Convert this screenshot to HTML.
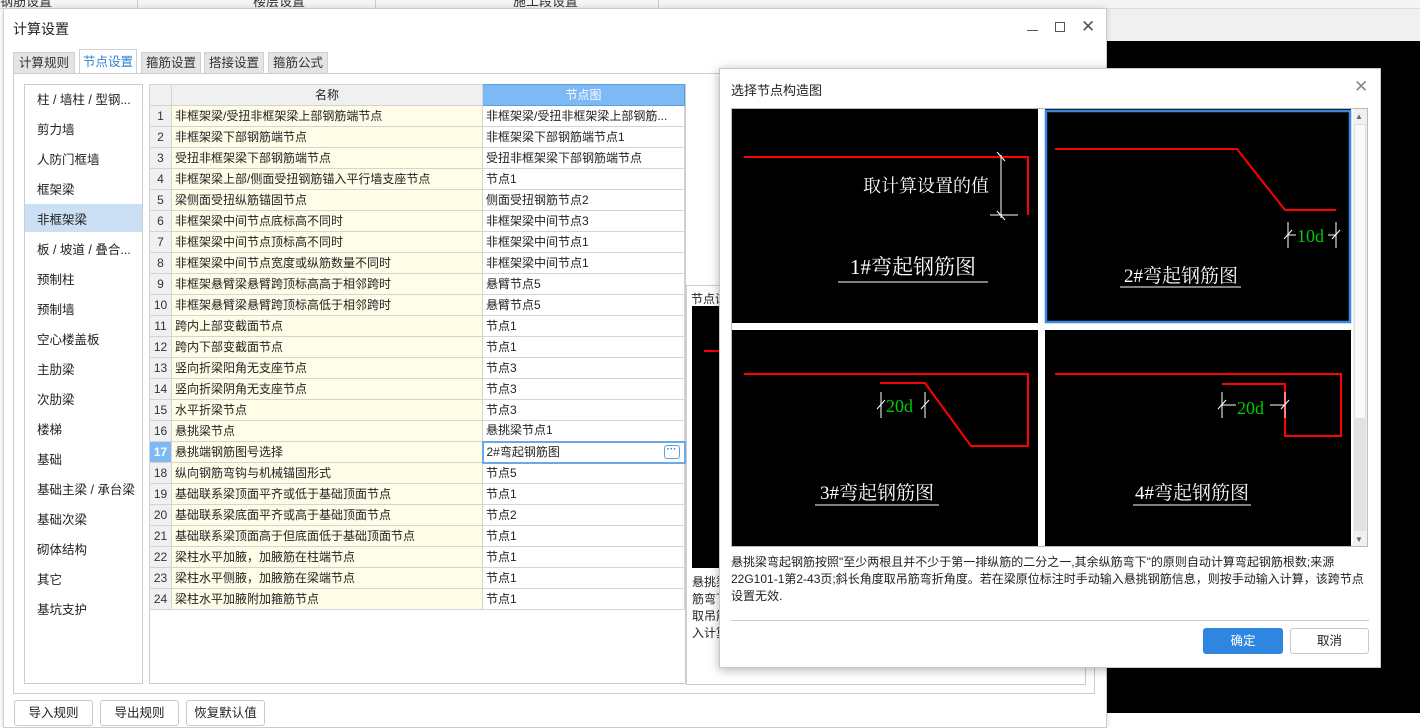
<!DOCTYPE html>
<html><head><meta charset="utf-8"><style>
*{box-sizing:border-box;margin:0;padding:0}
body{width:1420px;height:713px;overflow:hidden;background:#fff;position:relative;font-family:"Liberation Sans","Noto Sans CJK SC",sans-serif;font-size:12px;color:#222}
.a{position:absolute}
.tab{position:absolute;top:52px;height:21px;border:1px solid #d0d0d0;border-bottom:none;background:#e4e4e4;font-size:12.5px;color:#333;text-align:center;line-height:20px}
.li{position:absolute;left:37px;font-size:12.5px;color:#222}
table{border-collapse:collapse;position:absolute;left:149px;top:84px;table-layout:fixed}
td{border:1px solid #d4d4d4;height:21px;padding:0 3px;white-space:nowrap;overflow:hidden;font-size:12px;line-height:19px}
tr{height:21px}
td.n{background:#f0f0f0;text-align:center;color:#333;padding:0}
td.m{background:#fffde8}
.btn{position:absolute;border:1px solid #c8c8c8;border-radius:3px;background:#fff;text-align:center;font-size:12.5px}
</style></head><body>
<div class="a" style="left:0;top:0;width:1420px;height:9px;background:#f5f5f5;border-bottom:1px solid #ddd"></div>
<div class="a" style="left:0;top:-9px;font-size:13px;color:#333">钢筋设置</div>
<div class="a" style="left:253px;top:-9px;font-size:13px;color:#333">楼层设置</div>
<div class="a" style="left:513px;top:-9px;font-size:13px;color:#333">施工段设置</div>
<div class="a" style="left:137px;top:0;width:1px;height:8px;background:#ccc"></div>
<div class="a" style="left:375px;top:0;width:1px;height:8px;background:#ccc"></div>
<div class="a" style="left:658px;top:0;width:1px;height:8px;background:#ccc"></div>
<div class="a" style="left:1106px;top:9px;width:314px;height:32px;background:#f0f0f0"></div>
<div class="a" style="left:1106px;top:41px;width:314px;height:672px;background:#000"></div>

<div class="a" style="left:3px;top:8px;width:1104px;height:720px;background:#fff;border:1px solid #ccc;box-shadow:0 0 6px rgba(0,0,0,.15)"></div>
<div class="a" style="left:13px;top:19px;font-size:14px;color:#222">计算设置</div>
<div class="a" style="left:1027px;top:30px;width:11px;height:1px;background:#555"></div>
<div class="a" style="left:1055px;top:22px;width:10px;height:10px;border:1px solid #555"></div>
<div class="a" style="left:1081px;top:17px;font-size:17px;color:#555">✕</div>
<div class="tab" style="left:13px;width:62px">计算规则</div>
<div class="tab" style="left:79px;top:49px;height:25px;width:58px;background:#fff;color:#2a7fd6;line-height:24px">节点设置</div>
<div class="tab" style="left:141px;width:60px">箍筋设置</div>
<div class="tab" style="left:204px;width:60px">搭接设置</div>
<div class="tab" style="left:268px;width:60px">箍筋公式</div>
<div class="a" style="left:13px;top:73px;width:1082px;height:621px;border:1px solid #ccc"></div>

<div class="a" style="left:24px;top:84px;width:119px;height:600px;border:1px solid #ccc"></div>
<div class="a" style="left:25px;top:204px;width:117px;height:28px;background:#cce0f5"></div>
<div class="li" style="top:89px">柱 / 墙柱 / 型钢...</div>
<div class="li" style="top:119px">剪力墙</div>
<div class="li" style="top:149px">人防门框墙</div>
<div class="li" style="top:179px">框架梁</div>
<div class="li" style="top:209px">非框架梁</div>
<div class="li" style="top:239px">板 / 坡道 / 叠合...</div>
<div class="li" style="top:269px">预制柱</div>
<div class="li" style="top:299px">预制墙</div>
<div class="li" style="top:329px">空心楼盖板</div>
<div class="li" style="top:359px">主肋梁</div>
<div class="li" style="top:389px">次肋梁</div>
<div class="li" style="top:419px">楼梯</div>
<div class="li" style="top:449px">基础</div>
<div class="li" style="top:479px">基础主梁 / 承台梁</div>
<div class="li" style="top:509px">基础次梁</div>
<div class="li" style="top:539px">砌体结构</div>
<div class="li" style="top:569px">其它</div>
<div class="li" style="top:599px">基坑支护</div>

<div class="a" style="left:149px;top:84px;width:537px;height:600px;border:1px solid #ccc"></div>
<table>
<colgroup><col style="width:22px"><col style="width:311px"><col style="width:202px"></colgroup>
<tr style="height:20px"><td class="n" style="height:20px"></td><td style="background:#f0f0f0;text-align:center">名称</td><td style="background:#7db9f5;color:#fff;text-align:center;border:1px solid #5a9ee6">节点图</td></tr>
<tr><td class="n">1</td><td class="m">非框架梁/受扭非框架梁上部钢筋端节点</td><td>非框架梁/受扭非框架梁上部钢筋...</td></tr>
<tr><td class="n">2</td><td class="m">非框架梁下部钢筋端节点</td><td>非框架梁下部钢筋端节点1</td></tr>
<tr><td class="n">3</td><td class="m">受扭非框架梁下部钢筋端节点</td><td>受扭非框架梁下部钢筋端节点</td></tr>
<tr><td class="n">4</td><td class="m">非框架梁上部/侧面受扭钢筋锚入平行墙支座节点</td><td>节点1</td></tr>
<tr><td class="n">5</td><td class="m">梁侧面受扭纵筋锚固节点</td><td>侧面受扭钢筋节点2</td></tr>
<tr><td class="n">6</td><td class="m">非框架梁中间节点底标高不同时</td><td>非框架梁中间节点3</td></tr>
<tr><td class="n">7</td><td class="m">非框架梁中间节点顶标高不同时</td><td>非框架梁中间节点1</td></tr>
<tr><td class="n">8</td><td class="m">非框架梁中间节点宽度或纵筋数量不同时</td><td>非框架梁中间节点1</td></tr>
<tr><td class="n">9</td><td class="m">非框架悬臂梁悬臂跨顶标高高于相邻跨时</td><td>悬臂节点5</td></tr>
<tr><td class="n">10</td><td class="m">非框架悬臂梁悬臂跨顶标高低于相邻跨时</td><td>悬臂节点5</td></tr>
<tr><td class="n">11</td><td class="m">跨内上部变截面节点</td><td>节点1</td></tr>
<tr><td class="n">12</td><td class="m">跨内下部变截面节点</td><td>节点1</td></tr>
<tr><td class="n">13</td><td class="m">竖向折梁阳角无支座节点</td><td>节点3</td></tr>
<tr><td class="n">14</td><td class="m">竖向折梁阴角无支座节点</td><td>节点3</td></tr>
<tr><td class="n">15</td><td class="m">水平折梁节点</td><td>节点3</td></tr>
<tr><td class="n">16</td><td class="m">悬挑梁节点</td><td>悬挑梁节点1</td></tr>
<tr><td class="n" style="background:#7db9f5;color:#fff;font-weight:bold">17</td><td class="m">悬挑端钢筋图号选择</td><td style="border:2px solid #6aa8ea;position:relative">2#弯起钢筋图<span style="position:absolute;right:4px;top:2px;width:16px;height:14px;border:1px solid #5a9ee6;border-radius:3px;color:#2a7fd6;font-size:10px;line-height:8px;text-align:center;font-weight:bold">···</span></td></tr>
<tr><td class="n">18</td><td class="m">纵向钢筋弯钩与机械锚固形式</td><td>节点5</td></tr>
<tr><td class="n">19</td><td class="m">基础联系梁顶面平齐或低于基础顶面节点</td><td>节点1</td></tr>
<tr><td class="n">20</td><td class="m">基础联系梁底面平齐或高于基础顶面节点</td><td>节点2</td></tr>
<tr><td class="n">21</td><td class="m">基础联系梁顶面高于但底面低于基础顶面节点</td><td>节点1</td></tr>
<tr><td class="n">22</td><td class="m">梁柱水平加腋，加腋筋在柱端节点</td><td>节点1</td></tr>
<tr><td class="n">23</td><td class="m">梁柱水平侧腋，加腋筋在梁端节点</td><td>节点1</td></tr>
<tr><td class="n">24</td><td class="m">梁柱水平加腋附加箍筋节点</td><td>节点1</td></tr>
</table>

<div class="a" style="left:686px;top:285px;width:400px;height:400px;border:1px solid #ccc"></div>
<div class="a" style="left:691px;top:290px;font-size:12px">节点设置</div>
<div class="a" style="left:692px;top:306px;width:60px;height:262px;background:#000"></div>
<div class="a" style="left:704px;top:350px;width:30px;height:2px;background:#f00"></div>
<div class="a" style="left:692px;top:574px;font-size:12px;line-height:17px">悬挑梁<br>筋弯下<br>取吊筋<br>入计算</div>

<div class="btn" style="left:14px;top:700px;width:79px;height:26px;line-height:24px">导入规则</div>
<div class="btn" style="left:100px;top:700px;width:79px;height:26px;line-height:24px">导出规则</div>
<div class="btn" style="left:186px;top:700px;width:79px;height:26px;line-height:24px">恢复默认值</div>

<div class="a" style="left:719px;top:68px;width:662px;height:600px;background:#fff;border:1px solid #c8c8c8;box-shadow:0 2px 10px rgba(0,0,0,.3)"></div>
<div class="a" style="left:731px;top:80px;font-size:13px">选择节点构造图</div>
<div class="a" style="left:1354px;top:77px;font-size:17px;color:#888">✕</div>
<div class="a" style="left:731px;top:108px;width:637px;height:439px;border:1px solid #bbb;background:#fff"></div>
<svg class="a" style="left:732px;top:109px" width="621" height="437" viewBox="732 109 621 437" font-family="Liberation Serif,Noto Serif CJK SC,serif">
<rect x="732" y="109" width="306" height="214" fill="#000"/>
<rect x="1045" y="109" width="306" height="214" fill="#000"/>
<rect x="1046" y="111" width="304" height="211" fill="none" stroke="#3a86e0" stroke-width="2.5"/>
<rect x="732" y="330" width="306" height="216" fill="#000"/>
<rect x="1045" y="330" width="306" height="216" fill="#000"/>
<g fill="none" stroke="#f00" stroke-width="2">
<polyline points="744,157 1028,157 1028,215"/>
<polyline points="1055,149 1237,149 1285,210 1336,210"/>
<polyline points="744,374 1028,374 1028,446 971,446 925,383 880,383"/>
<polyline points="1055,374 1341,374 1341,436 1285,436 1285,384 1222,384"/>
</g>
<g stroke="#fff" stroke-width="1" fill="none">
<line x1="1001" y1="155" x2="1001" y2="218"/><line x1="990" y1="215" x2="1018" y2="215"/>
<line x1="997" y1="152" x2="1005" y2="161"/><line x1="997" y1="211" x2="1005" y2="220"/>
<line x1="838" y1="282" x2="988" y2="282"/>
<line x1="1288" y1="222" x2="1288" y2="248"/><line x1="1336" y1="222" x2="1336" y2="248"/>
<line x1="1284" y1="239" x2="1292" y2="230"/><line x1="1332" y1="239" x2="1340" y2="230"/>
<line x1="1288" y1="235" x2="1296" y2="235"/><line x1="1328" y1="235" x2="1336" y2="235"/>
<line x1="1120" y1="287" x2="1241" y2="287"/>
<line x1="881" y1="392" x2="881" y2="418"/><line x1="925" y1="392" x2="925" y2="418"/>
<line x1="877" y1="409" x2="885" y2="400"/><line x1="921" y1="409" x2="929" y2="400"/>
<line x1="815" y1="505" x2="939" y2="505"/>
<line x1="1222" y1="392" x2="1222" y2="418"/><line x1="1285" y1="392" x2="1285" y2="418"/>
<line x1="1218" y1="409" x2="1226" y2="400"/><line x1="1281" y1="409" x2="1289" y2="400"/>
<line x1="1222" y1="405" x2="1236" y2="405"/><line x1="1270" y1="405" x2="1285" y2="405"/>
<line x1="1133" y1="505" x2="1251" y2="505"/>
</g>
<g fill="#fff">
<text x="863" y="192" font-size="18">取计算设置的值</text>
<text x="913" y="274" font-size="21" text-anchor="middle">1#弯起钢筋图</text>
<text x="1181" y="282" font-size="19" text-anchor="middle">2#弯起钢筋图</text>
<text x="877" y="499" font-size="19" text-anchor="middle">3#弯起钢筋图</text>
<text x="1192" y="499" font-size="19" text-anchor="middle">4#弯起钢筋图</text>
</g>
<g fill="#0c0" font-size="18">
<text x="1297" y="242">10d</text>
<text x="886" y="412">20d</text>
<text x="1237" y="414">20d</text>
</g>
</svg>
<div class="a" style="left:1353px;top:109px;width:14px;height:437px;background:#f0f0f0"></div>
<div class="a" style="left:1354px;top:124px;width:12px;height:295px;background:#fafafa;border:1px solid #e0e0e0"></div>
<div class="a" style="left:1354px;top:419px;width:12px;height:112px;background:#e2e2e2"></div>
<div class="a" style="left:1355px;top:112px;font-size:8px;color:#666">▲</div>
<div class="a" style="left:1355px;top:535px;font-size:8px;color:#666">▼</div>
<div class="a" style="left:731px;top:554px;width:640px;font-size:12px;line-height:17px;color:#222">悬挑梁弯起钢筋按照"至少两根且并不少于第一排纵筋的二分之一,其余纵筋弯下"的原则自动计算弯起钢筋根数;来源22G101-1第2-43页;斜长角度取吊筋弯折角度。若在梁原位标注时手动输入悬挑钢筋信息，则按手动输入计算，该跨节点设置无效.</div>
<div class="a" style="left:731px;top:620px;width:638px;height:1px;background:#ccc"></div>
<div class="btn" style="left:1203px;top:628px;width:80px;height:26px;line-height:24px;background:#2f86e0;border-color:#2f86e0;color:#fff">确定</div>
<div class="btn" style="left:1290px;top:628px;width:79px;height:26px;line-height:24px">取消</div>
</body></html>
